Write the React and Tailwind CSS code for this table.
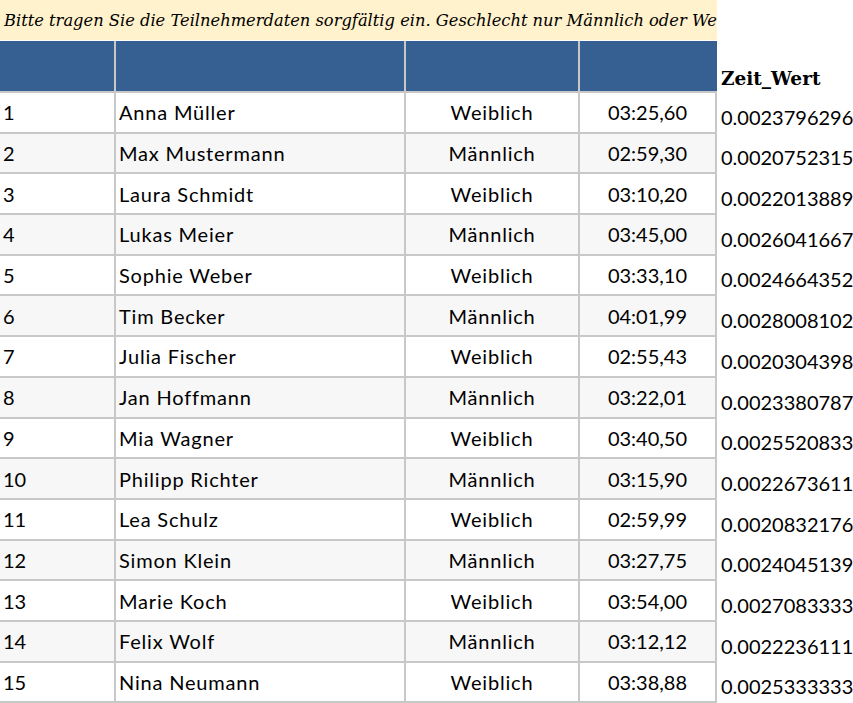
import React from 'react';

const rows = [
  { nr: 1, name: 'Anna Müller', sex: 'Weiblich', time: '03:25,60', value: '0.0023796296' },
  { nr: 2, name: 'Max Mustermann', sex: 'Männlich', time: '02:59,30', value: '0.0020752315' },
  { nr: 3, name: 'Laura Schmidt', sex: 'Weiblich', time: '03:10,20', value: '0.0022013889' },
  { nr: 4, name: 'Lukas Meier', sex: 'Männlich', time: '03:45,00', value: '0.0026041667' },
  { nr: 5, name: 'Sophie Weber', sex: 'Weiblich', time: '03:33,10', value: '0.0024664352' },
  { nr: 6, name: 'Tim Becker', sex: 'Männlich', time: '04:01,99', value: '0.0028008102' },
  { nr: 7, name: 'Julia Fischer', sex: 'Weiblich', time: '02:55,43', value: '0.0020304398' },
  { nr: 8, name: 'Jan Hoffmann', sex: 'Männlich', time: '03:22,01', value: '0.0023380787' },
  { nr: 9, name: 'Mia Wagner', sex: 'Weiblich', time: '03:40,50', value: '0.0025520833' },
  { nr: 10, name: 'Philipp Richter', sex: 'Männlich', time: '03:15,90', value: '0.0022673611' },
  { nr: 11, name: 'Lea Schulz', sex: 'Weiblich', time: '02:59,99', value: '0.0020832176' },
  { nr: 12, name: 'Simon Klein', sex: 'Männlich', time: '03:27,75', value: '0.0024045139' },
  { nr: 13, name: 'Marie Koch', sex: 'Weiblich', time: '03:54,00', value: '0.0027083333' },
  { nr: 14, name: 'Felix Wolf', sex: 'Männlich', time: '03:12,12', value: '0.0022236111' },
  { nr: 15, name: 'Nina Neumann', sex: 'Weiblich', time: '03:38,88', value: '0.0025333333' },
];

function App() {
  return (
    <div className="flex bg-white text-black" style={{ fontFamily: 'Lato, "Liberation Sans", sans-serif' }}>
      <div className="w-[717px] shrink-0">
        <div className="h-[41px] bg-[#fff2cc] overflow-hidden whitespace-nowrap flex items-center pl-[4px] pt-[3px] border-b border-white">
          <span className="italic text-[16.3px]" style={{ fontFamily: '"DejaVu Serif", serif' }}>
            Bitte tragen Sie die Teilnehmerdaten sorgfältig ein. Geschlecht nur Männlich oder Weiblich eintragen.
          </span>
        </div>
        <div className="flex h-[52px] border-b-2 border-[#c8c8c8]">
          <div className="w-[116px] bg-[#366092] border-r-2 border-[#c8c8c8]" />
          <div className="w-[290px] bg-[#366092] border-r-2 border-[#c8c8c8]" />
          <div className="w-[174px] bg-[#366092] border-r-2 border-[#c8c8c8]" />
          <div className="w-[137px] bg-[#366092]" />
        </div>
        {rows.map((r, i) => (
          <div
            key={r.nr}
            className={`flex h-[40.7px] border-b-2 border-[#c8c8c8] text-[20px] ${i % 2 === 1 ? 'bg-[#f7f7f7]' : 'bg-white'}`}
          >
            <div className="w-[116px] border-r-2 border-[#c8c8c8] flex items-center pl-[3px]">{r.nr}</div>
            <div className="w-[290px] border-r-2 border-[#c8c8c8] flex items-center pl-[3px] tracking-[0.8px]">{r.name}</div>
            <div className="w-[174px] border-r-2 border-[#c8c8c8] flex items-center justify-center tracking-[0.8px]">{r.sex}</div>
            <div className="w-[137px] border-r-2 border-[#c8c8c8] flex items-center justify-center">{r.time}</div>
          </div>
        ))}
      </div>
      <div className="flex-1 pl-[4px] whitespace-nowrap">
        <div className="h-[93px] flex items-end pb-0">
          <span className="font-bold text-[18.5px]" style={{ fontFamily: '"DejaVu Serif", serif' }}>
            Zeit_Wert
          </span>
        </div>
        {rows.map((r) => (
          <div key={r.nr} className="h-[40.7px] flex items-end pb-[2px] text-[20px]">
            {r.value}
          </div>
        ))}
      </div>
    </div>
  );
}

export default App;
